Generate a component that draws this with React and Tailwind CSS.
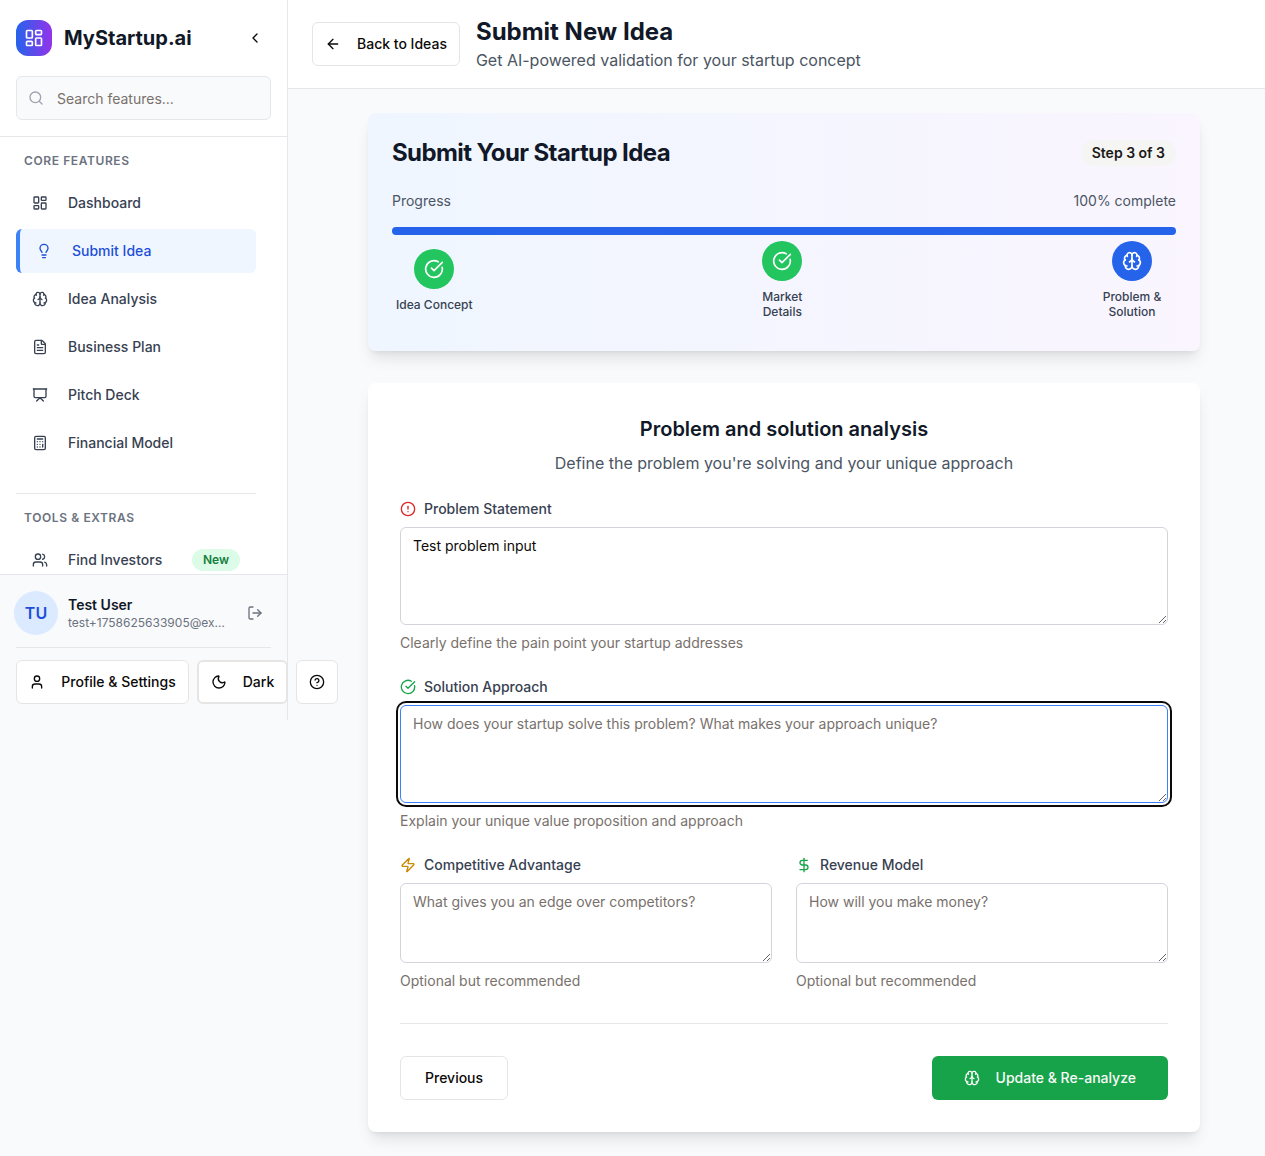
import React from "react";
import {
  LayoutDashboard, Lightbulb, Brain, FileText, Presentation, Calculator, Users,
  ChevronLeft, Search, LogOut, User, Moon, CircleHelp, ArrowLeft, CircleCheckBig,
  CircleAlert, Zap, DollarSign,
} from "lucide-react";

const coreItems = [
  { label: "Dashboard", Icon: LayoutDashboard },
  { label: "Submit Idea", Icon: Lightbulb, active: true },
  { label: "Idea Analysis", Icon: Brain },
  { label: "Business Plan", Icon: FileText },
  { label: "Pitch Deck", Icon: Presentation },
  { label: "Financial Model", Icon: Calculator },
];

function NavItem({ label, Icon, active, badge }) {
  return (
    <a
      className={
        "flex h-11 items-center rounded-md px-4 text-sm font-medium " +
        (active
          ? "border-l-4 border-[#3b82f6] bg-[#eff6ff] text-[#1d4ed8]"
          : "text-[#374151]")
      }
    >
      <Icon className="mr-5 size-4 shrink-0" />
      <span className="flex-1">{label}</span>
      {badge && (
        <span className="rounded-full border border-transparent bg-[#dcfce7] px-2.5 py-0.5 text-xs font-semibold text-[#15803d]">
          {badge}
        </span>
      )}
    </a>
  );
}

function SectionTitle({ children }) {
  return (
    <h3 className="mb-3 px-2 text-xs font-semibold tracking-wider text-[#6b7280] uppercase">
      {children}
    </h3>
  );
}

function OutlineButton({ className = "", children }) {
  return (
    <button
      className={
        "flex h-11 shrink-0 items-center justify-center gap-4 rounded-md border-[#e7e5e4] bg-white text-sm font-medium whitespace-nowrap text-[#0c0a09] " +
        className
      }
    >
      {children}
    </button>
  );
}

function Sidebar() {
  return (
    <aside className="relative z-10 flex h-[720px] w-72 shrink-0 flex-col border-r border-[#e5e7eb] bg-white">
      <div className="border-b border-[#e5e7eb] px-4 pt-5 pb-4">
        <div className="mb-5 flex items-center justify-between">
          <div className="flex items-center gap-3">
            <div className="flex size-9 items-center justify-center rounded-xl bg-linear-to-r/srgb from-[#2563eb] to-[#9333ea]">
              <LayoutDashboard className="size-5 text-white" />
            </div>
            <span className="text-xl font-bold text-[#111827]">MyStartup.ai</span>
          </div>
          <button className="px-2 text-[#0c0a09]">
            <ChevronLeft className="size-4" />
          </button>
        </div>
        <div className="flex h-11 items-center rounded-md border border-[#e5e7eb] bg-[#f9fafb] px-[11px]">
          <Search className="size-4 text-[#9ca3af]" />
          <input
            className="ml-[13px] h-10 w-44 bg-transparent pt-px text-sm outline-none placeholder:text-[#78716c]"
            placeholder="Search features..."
          />
        </div>
      </div>

      <nav className="min-h-0 flex-1 overflow-hidden pt-4 pr-[31px] pl-4">
        <SectionTitle>Core Features</SectionTitle>
        <div className="flex flex-col gap-1">
          {coreItems.map((item) => (
            <NavItem key={item.label} {...item} />
          ))}
        </div>
        <div className="mt-7 border-t border-[#e5e7eb] pt-4">
          <SectionTitle>Tools &amp; Extras</SectionTitle>
          <NavItem label="Find Investors" Icon={Users} badge="New" />
        </div>
      </nav>

      <div className="h-[146px] shrink-0 border-t border-[#e5e7eb] bg-[#f9fafb] px-4 pt-4">
        <div className="flex h-11 items-center">
          <div className="flex size-10 shrink-0 items-center justify-center rounded-full bg-[#dbeafe] font-semibold text-[#1d4ed8] ring-2 ring-[#dbeafe]">
            TU
          </div>
          <div className="ml-3 flex-1">
            <p className="text-sm font-semibold text-[#111827]">Test User</p>
            <p className="text-xs whitespace-nowrap text-[#6b7280]">test+1758625633905@ex…</p>
          </div>
          <LogOut className="mr-2 size-4 shrink-0 text-[#6b7280]" />
        </div>
        <div className="mt-3 flex gap-2 border-t border-[#e5e7eb] pt-3">
          <OutlineButton className="w-[173px] border">
            <User className="size-4" />
            Profile &amp; Settings
          </OutlineButton>
          <OutlineButton className="w-[91px] border-2">
            <Moon className="size-4" />
            Dark
          </OutlineButton>
          <OutlineButton className="w-[42px] border">
            <CircleHelp className="size-4" />
          </OutlineButton>
        </div>
      </div>
    </aside>
  );
}

function Step({ label, Icon, current }) {
  return (
    <div className="flex flex-col items-center px-1">
      <div
        className={
          "flex size-10 items-center justify-center rounded-full text-white " +
          (current ? "bg-[#2563eb]" : "bg-[#22c55e]")
        }
      >
        <Icon className="size-5" />
      </div>
      <span className="mt-2 max-w-20 text-center text-xs leading-tight font-medium text-[#374151]">
        {label}
      </span>
    </div>
  );
}

function ProgressCard() {
  return (
    <section className="h-[238px] rounded-lg bg-linear-to-r/srgb from-[#eff6ff] to-[#faf5ff] p-6 shadow-lg">
      <div className="flex items-center justify-between">
        <h2 className="text-2xl font-bold tracking-tight text-[#111827]">
          Submit Your Startup Idea
        </h2>
        <span className="rounded-full bg-[#f5f5f4] px-[11px] py-[3px] text-sm font-semibold text-[#1c1917]">
          Step 3 of 3
        </span>
      </div>
      <div className="mt-[22px] flex justify-between text-sm text-[#4b5563]">
        <span>Progress</span>
        <span>100% complete</span>
      </div>
      <div className="mt-4 h-2 rounded-full bg-[#2563eb]" />
      <div className="mt-1.5 flex items-center justify-between">
        <Step label="Idea Concept" Icon={CircleCheckBig} />
        <Step label={<>Market<br />Details</>} Icon={CircleCheckBig} />
        <Step label="Problem & Solution" Icon={Brain} current />
      </div>
    </section>
  );
}

function Field({ label, Icon, iconClass, help, areaClass, ...props }) {
  return (
    <div className="flex flex-col gap-2">
      <label className="flex items-center gap-2 text-sm font-medium text-[#374151]">
        <Icon className={"size-4 " + iconClass} />
        {label}
      </label>
      <textarea
        className={
          "block w-full rounded-md border bg-white px-3 py-2 text-sm text-[#0c0a09] outline-none placeholder:text-[#78716c] " +
          areaClass
        }
        {...props}
      />
      <p className="text-sm text-[#78716c]">{help}</p>
    </div>
  );
}

function IdeaForm() {
  return (
    <section className="mt-8 rounded-lg bg-white p-8 shadow-lg">
      <div className="mb-6 text-center">
        <h3 className="text-xl font-semibold text-[#111827]">Problem and solution analysis</h3>
        <p className="mt-2 text-[#4b5563]">
          Define the problem you're solving and your unique approach
        </p>
      </div>
      <div className="flex flex-col gap-6">
        <Field
          label="Problem Statement"
          Icon={CircleAlert}
          iconClass="text-[#dc2626]"
          help="Clearly define the pain point your startup addresses"
          areaClass="h-[98px] border-[#d1d5db]"
          defaultValue="Test problem input"
        />
        <Field
          label="Solution Approach"
          Icon={CircleCheckBig}
          iconClass="text-[#16a34a]"
          help="Explain your unique value proposition and approach"
          areaClass="h-[98px] border-[#3b82f6] ring-2 ring-[#0c0a09] ring-offset-2"
          placeholder="How does your startup solve this problem? What makes your approach unique?"
        />
        <div className="grid grid-cols-2 gap-6">
          <Field
            label="Competitive Advantage"
            Icon={Zap}
            iconClass="text-[#ca8a04]"
            help="Optional but recommended"
            areaClass="h-20 border-[#d1d5db]"
            placeholder="What gives you an edge over competitors?"
          />
          <Field
            label="Revenue Model"
            Icon={DollarSign}
            iconClass="text-[#16a34a]"
            help="Optional but recommended"
            areaClass="h-20 border-[#d1d5db]"
            placeholder="How will you make money?"
          />
        </div>
      </div>
      <div className="mt-8 flex justify-between border-t border-[#e5e7eb] pt-8">
        <OutlineButton className="border px-6">Previous</OutlineButton>
        <button className="flex h-11 items-center gap-4 rounded-md bg-[#16a34a] px-8 text-sm font-medium text-[#fafaf9]">
          <Brain className="size-4" />
          Update &amp; Re-analyze
        </button>
      </div>
    </section>
  );
}

export default function App() {
  return (
    <div className="flex min-h-[1156px] bg-[#f9fafb] font-['Inter',sans-serif]">
      <Sidebar />
      <main className="min-w-0 flex-1">
        <header className="flex items-center gap-4 border-b border-[#e5e7eb] bg-white px-6 py-4">
          <OutlineButton className="border px-3">
            <ArrowLeft className="size-4" />
            Back to Ideas
          </OutlineButton>
          <div>
            <h1 className="text-2xl font-bold text-[#111827]">Submit New Idea</h1>
            <p className="text-[#4b5563]">Get AI-powered validation for your startup concept</p>
          </div>
        </header>
        <div className="py-6 pr-[65px] pl-20">
          <ProgressCard />
          <IdeaForm />
        </div>
      </main>
    </div>
  );
}
